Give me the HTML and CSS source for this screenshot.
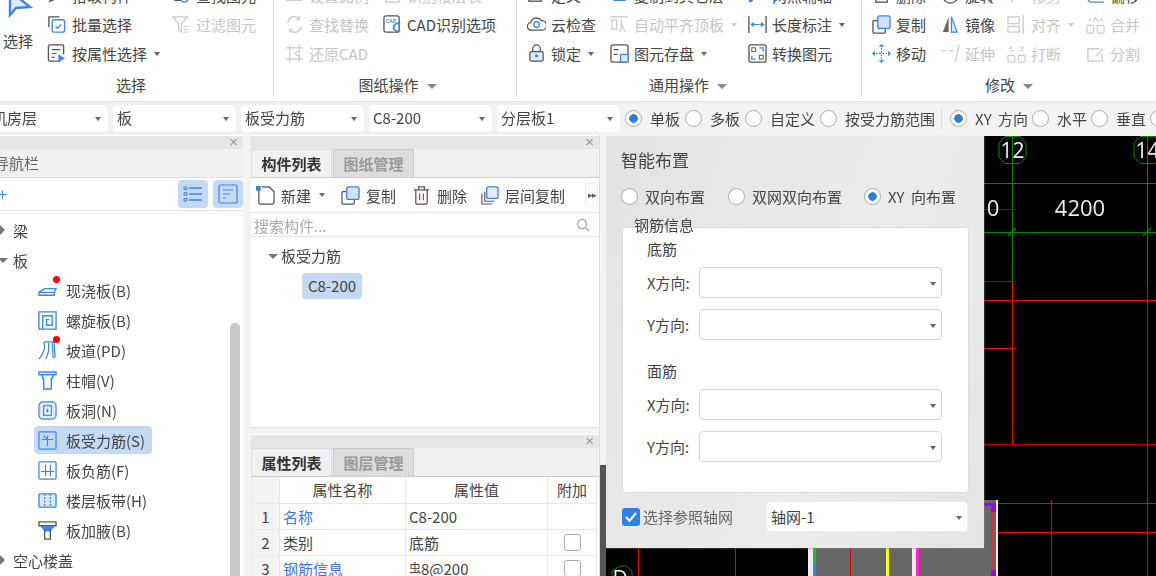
FILE: index.html
```html
<!DOCTYPE html>
<html lang="zh-CN">
<head>
  <meta charset="UTF-8">
  <title>智能布置</title>
  <link rel="stylesheet" href="styles.css">
</head>
<body>
<div class="app">
  <!-- 功能区 -->
  <div class="ribbon">
    <div class="group group-select">
      <div class="tools">
        <div class="big-tool">
          <svg class="big-icon" viewBox="0 0 30 30"><path d="M5 1v24l6-7 14-1z" fill="#dcebfb" stroke="#3a86e8" stroke-width="2.4"/></svg>
          <span>选择</span>
        </div>
        <div class="col col-a1">
          <div class="tool"><svg class="ic" viewBox="0 0 20 20"><path d="M3 16l2-5 8-8 3 3-8 8z" fill="none" stroke="#555" stroke-width="1.5"/></svg>拾取构件</div>
          <div class="tool"><svg class="ic" viewBox="0 0 20 20"><path d="M13 2H2v11" fill="none" stroke="#555" stroke-width="1.4"/><rect x="5.500" y="5" width="13" height="13" rx="2" fill="#fff" stroke="#3a86e8" stroke-width="1.4"/><path d="M9 12l2 2 4-4" fill="none" stroke="#3a86e8" stroke-width="1.400"/></svg>批量选择</div>
          <div class="tool"><svg class="ic" viewBox="0 0 20 20"><path d="M14 18H3a1.500 1.500 0 0 1-1.500-1.500v-14A1.500 1.500 0 0 1 3 1h13a1.500 1.500 0 0 1 1.500 1.500V11" fill="none" stroke="#555" stroke-width="1.400"/><path d="M5 6h9M5 10h5M5 14h3" stroke="#555" stroke-width="1.300"/><path d="M12 11l7 4-7 4z" fill="#3a86e8"/></svg>按属性选择<i class="caret"></i></div>
        </div>
        <div class="col">
          <div class="tool"><svg class="ic" viewBox="0 0 20 20"><rect x="2" y="2" width="13" height="13" rx="2" fill="none" stroke="#555" stroke-width="1.400"/><circle cx="13" cy="13" r="4" fill="#fff" stroke="#3a86e8" stroke-width="1.500"/></svg>查找图元</div>
          <div class="tool off"><svg class="ic" viewBox="0 0 20 20"><path d="M1 2h15l-6 7v9l-3-3V9z" fill="none" stroke="#ccc" stroke-width="1.400"/><path d="M12 12h6M12 15h6M12 18h6" stroke="#ccc"/></svg>过滤图元</div>
        </div>
      </div>
      <div class="group-name">选择</div>
    </div>

    <div class="group group-drawing">
      <div class="tools">
        <div class="col col-b1">
          <div class="tool off"><svg class="ic" viewBox="0 0 20 20"><rect x="2" y="6" width="16" height="9" fill="none" stroke="#ccc" stroke-width="1.400"/></svg>设置比例</div>
          <div class="tool off"><svg class="ic" viewBox="0 0 20 20"><path d="M3 8a7 7 0 0 1 12-4M17 12a7 7 0 0 1-12 4" fill="none" stroke="#ccc" stroke-width="1.600"/><path d="M15 1v4h-4M5 19v-4h4" fill="none" stroke="#ccc" stroke-width="1.200"/></svg>查找替换</div>
          <div class="tool off"><svg class="ic" viewBox="0 0 20 20"><path d="M1 4h18M1 16h18M5 1v18M15 1v18" stroke="#ccc" stroke-width="1.300"/><path d="M15 7l-5 3 5 3" fill="none" stroke="#ccc" stroke-width="1.300"/></svg>还原CAD</div>
        </div>
        <div class="col">
          <div class="tool off"><svg class="ic" viewBox="0 0 20 20"><rect x="3" y="3" width="14" height="14" fill="none" stroke="#ccc" stroke-width="1.400"/></svg>识别楼层表</div>
          <div class="tool"><svg class="ic" viewBox="0 0 20 20"><rect x="1" y="1" width="16" height="17" rx="2" fill="#fff" stroke="#555" stroke-width="1.400"/><text class="ic-cad" x="3" y="8">CAD</text><path d="M18 10a4 4 0 1 0 0 6" fill="none" stroke="#3a86e8" stroke-width="1.800"/></svg>CAD识别选项</div>
        </div>
      </div>
      <div class="group-name">图纸操作<i class="caret caret-name"></i></div>
    </div>

    <div class="group group-common">
      <div class="tools">
        <div class="col col-c1">
          <div class="tool"><svg class="ic" viewBox="0 0 20 20"><rect x="2" y="3" width="13" height="13" fill="none" stroke="#555" stroke-width="1.400"/><path d="M10 13l7-7" stroke="#3a86e8" stroke-width="1.600"/></svg>定义</div>
          <div class="tool"><svg class="ic" viewBox="0 0 20 20"><path d="M5 16a4 4 0 0 1-1-8 6 6 0 0 1 11-2 5 5 0 0 1 1 10z" fill="none" stroke="#555" stroke-width="1.400"/><circle cx="10" cy="10" r="3" fill="#dcebfb" stroke="#3a86e8" stroke-width="1.300"/></svg>云检查</div>
          <div class="tool"><svg class="ic" viewBox="0 0 20 20"><rect x="3" y="8" width="14" height="10" rx="1.500" fill="#dcebfb" stroke="#555" stroke-width="1.300"/><path d="M6 8V5a4 4 0 0 1 8 0v3" fill="none" stroke="#555" stroke-width="1.300"/><circle cx="10" cy="12.500" r="1.500" fill="#2f6fc6"/></svg>锁定<i class="caret"></i></div>
        </div>
        <div class="col col-c2">
          <div class="tool"><svg class="ic" viewBox="0 0 20 20"><rect x="3" y="1" width="14" height="14" rx="2" fill="#cfe2f9" stroke="#3a86e8" stroke-width="1.400"/></svg>复制到其它层</div>
          <div class="tool off"><svg class="ic" viewBox="0 0 20 20"><path d="M0 2h19" stroke="#ccc" stroke-width="1.500"/><rect x="2" y="5" width="5" height="10" fill="none" stroke="#ccc" stroke-width="1.300"/><path d="M12 5v7M10 18l3-7 3 7" fill="none" stroke="#ccc" stroke-width="1.300"/></svg>自动平齐顶板<i class="caret caret-off"></i></div>
          <div class="tool"><svg class="ic" viewBox="0 0 20 20"><rect x="1" y="1" width="18" height="18" rx="2" fill="none" stroke="#555" stroke-width="1.400"/><path d="M4 6h5M4 11h4" stroke="#555" stroke-width="1.300"/><rect x="11" y="11" width="8" height="8" fill="#dcebfb" stroke="#3a86e8" stroke-width="1.300"/></svg>图元存盘<i class="caret"></i></div>
        </div>
        <div class="col">
          <div class="tool"><svg class="ic" viewBox="0 0 20 20"><path d="M1 16L17 4" stroke="#555" stroke-width="1.400"/><circle cx="3" cy="15" r="2" fill="#3a86e8"/></svg>两点辅轴</div>
          <div class="tool"><svg class="ic" viewBox="0 0 20 20"><path d="M1 1v18M19 1v18" stroke="#555" stroke-width="1.400"/><path d="M3 10h14M3 10l3-2v4zM17 10l-3-2v4z" fill="#3a86e8" stroke="#3a86e8"/></svg>长度标注<i class="caret"></i></div>
          <div class="tool"><svg class="ic" viewBox="0 0 20 20"><rect x="1" y="1" width="18" height="18" rx="2" fill="none" stroke="#555" stroke-width="1.400"/><rect x="4" y="4" width="4" height="4" fill="none" stroke="#555"/><rect x="12" y="12" width="4" height="4" fill="none" stroke="#555"/><path d="M12 4h4v4M8 16H4v-4" fill="none" stroke="#3a86e8" stroke-width="1.300"/></svg>转换图元</div>
        </div>
      </div>
      <div class="group-name">通用操作<i class="caret caret-name"></i></div>
    </div>

    <div class="group group-edit">
      <div class="tools">
        <div class="col col-d1">
          <div class="tool"><svg class="ic" viewBox="0 0 20 20"><rect x="4" y="3" width="12" height="14" fill="none" stroke="#555" stroke-width="1.400"/><path d="M8 6v6M12 6v6" stroke="#d33" stroke-width="1.400"/></svg>删除</div>
          <div class="tool"><svg class="ic" viewBox="0 0 20 20"><path d="M6 6H2a1 1 0 0 0-1 1v11a1 1 0 0 0 1 1h11a1 1 0 0 0 1-1v-4" fill="none" stroke="#555" stroke-width="1.400"/><rect x="6" y="1" width="13" height="13" rx="2" fill="#cfe2f9" stroke="#3a86e8" stroke-width="1.400"/></svg>复制</div>
          <div class="tool"><svg class="ic" viewBox="0 0 20 20"><path d="M10 4v12M4 10h12" stroke="#3a86e8" stroke-width="1.300" stroke-dasharray="2 1.500"/><path d="M10 0l3 3H7zM10 20l3-3H7zM0 10l3-3v6zM20 10l-3-3v6z" fill="#3a86e8"/></svg>移动</div>
        </div>
        <div class="col col-d2">
          <div class="tool"><svg class="ic" viewBox="0 0 20 20"><circle cx="10" cy="10" r="8" fill="none" stroke="#555" stroke-width="1.400"/></svg>旋转</div>
          <div class="tool"><svg class="ic" viewBox="0 0 20 20"><path d="M8 2L2 18h6z" fill="#666"/><path d="M11 2l6 16h-6z" fill="#dcebfb" stroke="#3a86e8" stroke-width="1.300"/></svg>镜像</div>
          <div class="tool off"><svg class="ic" viewBox="0 0 20 20"><path d="M0 7h5M8 7h5" stroke="#ccc" stroke-width="1.400"/><path d="M19 1l-4 18" stroke="#ccc" stroke-width="1.400"/></svg>延伸</div>
        </div>
        <div class="col col-d3">
          <div class="tool off"><svg class="ic" viewBox="0 0 20 20"><path d="M8 2l-3 16" stroke="#ccc" stroke-width="1.400"/></svg>修剪</div>
          <div class="tool off"><svg class="ic" viewBox="0 0 20 20"><rect x="1" y="2" width="12" height="7" fill="none" stroke="#ccc" stroke-width="1.400"/><rect x="1" y="12" width="12" height="6" fill="none" stroke="#ccc" stroke-width="1.400"/><path d="M17 0v20" stroke="#ccc" stroke-width="1.400"/></svg>对齐<i class="caret caret-off"></i></div>
          <div class="tool off"><svg class="ic" viewBox="0 0 20 20"><rect x="1" y="12" width="7" height="7" rx="1" fill="none" stroke="#ccc" stroke-width="1.300"/><rect x="12" y="12" width="7" height="7" rx="1" fill="none" stroke="#ccc" stroke-width="1.300"/><path d="M3 3l2 2M5 3L3 5M15 3l2 2M17 3l-2 2" stroke="#ccc" stroke-width="1.300"/><path d="M7 7H3M13 7h4" stroke="#ccc"/></svg>打断</div>
        </div>
        <div class="col">
          <div class="tool"><svg class="ic" viewBox="0 0 20 20"><path d="M19 17H6a4 4 0 0 1-4-4V5" fill="none" stroke="#3a86e8" stroke-width="1.500"/><path d="M19 13H8a2 2 0 0 1-2-2V5" fill="none" stroke="#555" stroke-width="1.300"/></svg>偏移</div>
          <div class="tool off"><svg class="ic" viewBox="0 0 20 20"><rect x="1" y="11" width="7" height="8" rx="1" fill="none" stroke="#ccc" stroke-width="1.300"/><rect x="12" y="11" width="7" height="8" rx="1" fill="none" stroke="#ccc" stroke-width="1.300"/><path d="M4 3v4M16 3v4M7 7l3-4 3 4" fill="none" stroke="#ccc" stroke-width="1.300"/></svg>合并</div>
          <div class="tool off"><svg class="ic" viewBox="0 0 20 20"><path d="M14 5H2v13h15v-8" fill="none" stroke="#ccc" stroke-width="1.400"/><path d="M10 13l8-8" stroke="#ccc" stroke-width="1.400"/></svg>分割</div>
        </div>
      </div>
      <div class="group-name">修改<i class="caret caret-name"></i></div>
    </div>
  </div>

  <!-- 属性工具条 -->
  <div class="optbar">
    <div class="combo combo-floor">机房层<i class="caret"></i></div>
    <div class="combo">板<i class="caret"></i></div>
    <div class="combo">板受力筋<i class="caret"></i></div>
    <div class="combo">C8-200<i class="caret"></i></div>
    <div class="combo">分层板1<i class="caret"></i></div>
    <div class="radios">
      <label class="radio-item"><span class="radio checked"></span>单板</label>
      <label class="radio-item"><span class="radio"></span>多板</label>
      <label class="radio-item"><span class="radio"></span>自定义</label>
      <label class="radio-item"><span class="radio"></span>按受力筋范围</label>
    </div>
    <div class="radios radios-dir">
      <label class="radio-item"><span class="radio checked"></span>XY 方向</label>
      <label class="radio-item"><span class="radio"></span>水平</label>
      <label class="radio-item"><span class="radio"></span>垂直</label>
      <label class="radio-item"><span class="radio"></span></label>
    </div>
  </div>

  <div class="work">
    <!-- 导航栏 -->
    <div class="panel nav">
      <div class="dockbar">×</div>
      <div class="nav-title">导航栏</div>
      <div class="nav-tools">
        <span class="nav-plus">+</span>
        <span class="view-btn"><svg viewBox="0 0 20 16" width="20" height="16"><path d="M6 2h13M6 8h13M6 14h13" stroke="#3a86e8" stroke-width="1.300"/><path d="M1 1h3v2.500H1zM1 6.700h3v2.500H1zM1 12.500h3V15H1z" fill="none" stroke="#3a86e8"/></svg></span>
        <span class="view-btn"><svg viewBox="0 0 20 20" width="20" height="20"><rect x="1" y="1" width="18" height="18" rx="2" fill="none" stroke="#3a86e8" stroke-width="1.200"/><path d="M5 6h10M5 10h7M5 14h3" stroke="#3a86e8" stroke-width="1.200"/></svg></span>
      </div>
      <div class="nav-tree">
        <div class="scrollbar"></div>
        <div class="node"><i class="arrow-r"></i>梁</div>
        <div class="node"><i class="arrow-d"></i>板</div>
        <div class="leaf"><span class="leaf-icon dotted"><svg class="ic" viewBox="0 0 20 20"><path d="M1 12l6-4h12l-2 4v3H1z" fill="#fff" stroke="#3a86e8" stroke-width="1.400"/><path d="M1 12h16" stroke="#3a86e8" stroke-width="1.200"/></svg></span>现浇板(B)</div>
        <div class="leaf"><span class="leaf-icon"><svg class="ic" viewBox="0 0 20 20"><path d="M1 1h18v18H1zM5 19V5h10v10h-6V9h3" fill="none" stroke="#3a86e8" stroke-width="1.400"/></svg></span>螺旋板(B)</div>
        <div class="leaf"><span class="leaf-icon dotted"><svg class="ic" viewBox="0 0 20 20"><path d="M6 1h11l1 17M6 1c2 5 0 12-5 18M11 2c1 6 0 12-3 17M15 2l1 16" fill="none" stroke="#3a86e8" stroke-width="1.300"/></svg></span>坡道(PD)</div>
        <div class="leaf"><span class="leaf-icon"><svg class="ic" viewBox="0 0 20 20"><path d="M1 1h18v3H1zM4 4l1 4h1v11h8V8h1l1-4" fill="none" stroke="#3a86e8" stroke-width="1.500"/></svg></span>柱帽(V)</div>
        <div class="leaf"><span class="leaf-icon"><svg class="ic" viewBox="0 0 20 20"><rect x="1" y="1" width="18" height="18" rx="4" fill="#dcebfb" stroke="#3a86e8" stroke-width="1.300"/><rect x="6" y="5" width="8" height="10" fill="#fff" stroke="#3a86e8" stroke-width="1.300"/><rect x="9" y="8" width="2" height="4" fill="#3a86e8"/></svg></span>板洞(N)</div>
        <div class="leaf selected"><span class="leaf-icon"><svg class="ic" viewBox="0 0 20 20"><rect x="1" y="1" width="18" height="18" rx="1" fill="none" stroke="#3a86e8" stroke-width="1.300"/><path d="M4 9h12M10 5v11M6 5l4 4" stroke="#3a86e8" stroke-width="1.200" fill="none"/></svg></span>板受力筋(S)</div>
        <div class="leaf"><span class="leaf-icon"><svg class="ic" viewBox="0 0 20 20"><rect x="1" y="1" width="18" height="18" rx="1" fill="none" stroke="#3a86e8" stroke-width="1.300"/><path d="M3 11h14M8 4v12M13 4v12" stroke="#3a86e8" stroke-width="1.200"/></svg></span>板负筋(F)</div>
        <div class="leaf"><span class="leaf-icon"><svg class="ic" viewBox="0 0 20 20"><rect x="1" y="3" width="18" height="14" rx="1" fill="#dcebfb" stroke="#3a86e8" stroke-width="1.400"/><path d="M7 3v14M13 3v14" stroke="#3a86e8" stroke-width="1.400" stroke-dasharray="2 1.500"/></svg></span>楼层板带(H)</div>
        <div class="leaf"><span class="leaf-icon"><svg class="ic" viewBox="0 0 20 20"><path d="M1 1h18v4H1z" fill="none" stroke="#555" stroke-width="1.400"/><path d="M2 5h16l-5 6H7z" fill="#3a86e8"/><path d="M7 9v10h6V9" fill="none" stroke="#555" stroke-width="1.400"/></svg></span>板加腋(B)</div>
        <div class="node"><i class="arrow-r"></i>空心楼盖</div>
      </div>
    </div>

    <div class="middle">
      <!-- 构件列表 -->
      <div class="panel parts">
        <div class="dockbar">×</div>
        <div class="tabs">
          <span class="tab active">构件列表</span>
          <span class="tab">图纸管理</span>
        </div>
        <div class="parts-tools">
          <span class="ptool ptool-new"><svg class="ic" viewBox="0 0 20 20"><path d="M3 4v13a2 2 0 0 0 2 2h12a2 2 0 0 0 2-2V6l-5-5H6" fill="none" stroke="#555" stroke-width="1.300"/><rect x="0" y="0" width="5" height="5" fill="#3a86e8"/></svg>新建<i class="caret"></i></span>
          <span class="ptool ptool-copy"><svg class="ic" viewBox="0 0 20 20"><path d="M6 6H2a1 1 0 0 0-1 1v11a1 1 0 0 0 1 1h11a1 1 0 0 0 1-1v-4" fill="none" stroke="#555" stroke-width="1.300"/><rect x="6" y="1" width="13" height="13" rx="2" fill="#cfe2f9" stroke="#3a86e8" stroke-width="1.400"/></svg>复制</span>
          <span class="ptool ptool-del"><svg class="ic" viewBox="0 0 20 20"><path d="M2 4h16M7 4V1h6v3M4 4v14a1 1 0 0 0 1 1h10a1 1 0 0 0 1-1V4" fill="none" stroke="#555" stroke-width="1.300"/><path d="M8 8v7M12 8v7" stroke="#d33" stroke-width="1.300"/></svg>删除</span>
          <span class="ptool"><svg class="ic" viewBox="0 0 20 20"><path d="M2 8v11h11M5 6v10h10" fill="none" stroke="#555" stroke-width="1.200"/><rect x="7" y="1" width="12" height="12" rx="2" fill="#e3eefc" stroke="#3a86e8" stroke-width="1.400"/></svg>层间复制</span>
          <span class="more-btn">▸▸</span>
        </div>
        <div class="search">
          <span>搜索构件...</span>
          <svg viewBox="0 0 14 14" width="14" height="14"><circle cx="6" cy="6" r="4.500" fill="none" stroke="#aaa" stroke-width="1.300"/><path d="M9.500 9.500l3.500 3.500" stroke="#aaa" stroke-width="1.300"/></svg>
        </div>
        <div class="parts-tree">
          <div class="parts-root"><i class="arrow-d"></i>板受力筋</div>
          <div class="chip">C8-200</div>
        </div>
      </div>

      <!-- 属性列表 -->
      <div class="panel props">
        <div class="dockbar">×</div>
        <div class="tabs">
          <span class="tab active">属性列表</span>
          <span class="tab">图层管理</span>
        </div>
        <table class="prop-table">
          <thead>
            <tr><th class="num"></th><th class="c-name">属性名称</th><th class="c-val">属性值</th><th class="c-add">附加</th></tr>
          </thead>
          <tbody>
            <tr><td class="num">1</td><td class="link">名称</td><td>C8-200</td><td></td></tr>
            <tr><td class="num">2</td><td>类别</td><td>底筋</td><td class="mid"><span class="check"></span></td></tr>
            <tr><td class="num">3</td><td class="link">钢筋信息</td><td><span class="rebar">虫</span>8@200</td><td class="mid"><span class="check"></span></td></tr>
          </tbody>
        </table>
      </div>
    </div>

    <div class="splitter"></div>

    <!-- 绘图区 -->
    <div class="canvas">
      <svg class="cad" viewBox="606 136 550 440" width="550" height="440">
        <g stroke="#080" fill="none">
          <path d="M984 183.500H1156M984 232.500H1156M1012.500 136V281M1147.500 136V281"/>
          <path d="M1008 236l8-8M1143 236l8-8" stroke-width="1.200"/>
          <path d="M1005 136.500h15l6 6.500v14l-6 6.500h-15l-6-6.500v-14z"/>
          <path d="M1140 136.500h15l6 6.500v14l-6 6.500h-15l-6-6.500v-14z"/>
          <path d="M612 576v-5l8-5h6l6 5v5"/>
        </g>
        <g stroke="#e00" fill="none">
          <path d="M984 209.500h31M984 281.500h31" stroke="#900"/>
          <path d="M984 300.500H1156M984 348.500h31M1012.500 281V444M1147.500 281V576M1051.500 500V576M997 503.500H1156M984 532.500H1156M638.500 548V576M735.500 548V576"/>
          <path d="M984 444.500H1156" stroke="#b00"/>
        </g>
        <rect x="808" y="500" width="190" height="76" fill="#eee"/>
        <rect x="813" y="500" width="99" height="76" fill="#666"/>
        <rect x="916" y="500" width="80" height="76" fill="#666"/>
        <path d="M850.500 548V576" stroke="#c00"/>
        <path d="M814.500 548V564" stroke="#0c3" stroke-width="3"/>
        <path d="M814.500 564V576" stroke="#38f" stroke-width="3"/>
        <path d="M887.500 548V576" stroke="#ff0" stroke-width="3"/>
        <path d="M917.500 548V576" stroke="#f2c" stroke-width="3"/>
        <path d="M992.500 503V576" stroke="#d33" stroke-width="2"/>
        <rect x="984" y="503" width="12" height="3" fill="#90f"/>
        <rect x="991" y="503" width="5" height="9" fill="#90f"/>
        <rect x="991" y="570" width="5" height="6" fill="#90f"/>
        <text class="cad-no" x="1012.500" y="158">12</text>
        <text class="cad-no" x="1147.500" y="158">14</text>
        <text class="cad-dim" x="993" y="216">0</text>
        <text class="cad-dim" x="1080" y="216">4200</text>
        <text class="cad-no" x="620" y="586">D</text>
      </svg>

      <div class="dialog">
        <div class="dlg-title">智能布置</div>
        <div class="dlg-modes">
          <label class="radio-item mode-a"><span class="radio"></span>双向布置</label>
          <label class="radio-item mode-b"><span class="radio"></span>双网双向布置</label>
          <label class="radio-item"><span class="radio checked"></span>XY 向布置</label>
        </div>
        <div class="rebar-box">
          <span class="legend">钢筋信息</span>
          <div class="sub">底筋</div>
          <div class="field"><label>X方向:</label><div class="dlg-combo"><i class="caret"></i></div></div>
          <div class="field"><label>Y方向:</label><div class="dlg-combo"><i class="caret"></i></div></div>
          <div class="sub sub-top">面筋</div>
          <div class="field"><label>X方向:</label><div class="dlg-combo"><i class="caret"></i></div></div>
          <div class="field"><label>Y方向:</label><div class="dlg-combo"><i class="caret"></i></div></div>
        </div>
        <div class="dlg-foot">
          <span class="blue-check"><svg viewBox="0 0 18 18" width="18" height="18"><path d="M4 9l3.500 4L14 5" fill="none" stroke="#fff" stroke-width="2"/></svg></span>
          <span class="foot-label">选择参照轴网</span>
          <div class="dlg-combo foot-combo">轴网-1<i class="caret"></i></div>
        </div>
      </div>
    </div>
  </div>
</div>
</body>
</html>
```

FILE: styles.css
```css
/* 页面 */
* {
  box-sizing: border-box;
}
html, body {
  margin: 0;
  height: 100%;
  overflow: hidden;
  background: #f3f3f3;
}
body {
  font-family: "Noto Sans CJK SC", "Liberation Sans", sans-serif;
  font-size: 15px;
  color: #444;
}
.app {
  width: 1156px;
  height: 576px;
  overflow: hidden;
  filter: blur(0.45px);
}
.caret {
  display: inline-block;
  width: 0;
  height: 0;
  margin-left: 8px;
  border-left: 3.500px solid transparent;
  border-right: 3.500px solid transparent;
  border-top: 4px solid #666;
}
.caret-off {
  border-top-color: #ccc;
}
.caret-name {
  margin-left: 8px;
  vertical-align: 2px;
  border-left-width: 5px;
  border-right-width: 5px;
  border-top-width: 5px;
  border-top-color: #888;
}

/* 功能区 */
.ribbon {
  display: flex;
  height: 102px;
  background: #fff;
  overflow: hidden;
  border-bottom: 1px solid #e2e2e2;
}
.group {
  height: 97px;
  display: flex;
  flex-direction: column;
  border-right: 1px solid #ddd;
}
.group-select { width: 274px; }
.group-drawing { width: 243px; padding-left: 11px; }
.group-common { width: 345px; padding-left: 10px; }
.group-edit { flex: 1; padding-left: 10px; border-right: 0; }
.tools {
  display: flex;
  height: 92px;
  flex: none;
  margin-top: -19px;
}
.group-name {
  height: 24px;
  line-height: 24px;
  text-align: center;
  white-space: nowrap;
}
.group-select .group-name { padding-right: 11px; }
.group-drawing .group-name { padding-right: 6px; }
.group-common .group-name { padding-right: 12px; }
.group-edit .group-name { padding-right: 10px; }
.big-tool {
  width: 47px;
  padding: 0 0 0 3px;
  display: flex;
  flex-direction: column;
  line-height: 22px;
}
.big-icon {
  display: block;
  width: 30px;
  height: 30px;
  margin: 9px 0 0 2px;
  flex: none;
}
.big-tool span {
  margin-top: 10px;
}
.col-a1 { width: 125px; }
.col-a1 .ic { margin-right: 6px; }
.col-b1 { width: 98px; }
.col-c1 { width: 83px; }
.col-c2 { width: 138px; }
.col-d1 { width: 69px; }
.col-d2 { width: 66px; }
.col-d3 { width: 79px; }
.tool {
  display: flex;
  align-items: center;
  height: 29px;
  white-space: nowrap;
}
.tool .caret {
  margin-left: 7px;
}
.off {
  color: #c6c6c6;
}
.ic {
  width: 19px;
  height: 19px;
  flex: none;
  margin-right: 5px;
}
.ic-cad {
  font: bold 5px "Liberation Sans", sans-serif;
  fill: #3a86e8;
}

/* 属性工具条 */
.optbar {
  display: flex;
  align-items: center;
  height: 33px;
  padding-bottom: 1px;
  gap: 5px;
  background: #f3f3f3;
  white-space: nowrap;
}
.combo {
  position: relative;
  flex: none;
  width: 123px;
  height: 27px;
  line-height: 26px;
  padding-left: 4px;
  background: #fff;
  border-radius: 3px;
  box-shadow: 0 0 1px #ccc;
}
.combo .caret {
  position: absolute;
  right: 7px;
  top: 12px;
}
.combo-floor {
  width: 122px;
  margin-left: -14px;
  padding-left: 6px;
}
.radios {
  display: flex;
  flex: none;
  gap: 5px;
}
.radio-item {
  display: flex;
  align-items: center;
  word-spacing: 3px;
}
.radio {
  display: inline-block;
  flex: none;
  width: 17px;
  height: 17px;
  margin-right: 8px;
  border: 1px solid #aaa;
  border-radius: 50%;
  background: #fff;
}
.radio.checked {
  background: radial-gradient(circle, #2b7de0 0 4px, #fff 4.500px);
}
.radios-dir {
  margin-left: 1px;
  padding-left: 8px;
  gap: 4px;
  border-left: 1px solid #ddd;
}

/* 下方工作区 */
.work {
  display: flex;
  height: 441px;
}
.panel {
  background: #fff;
}
.dockbar {
  height: 13px;
  margin-top: 1px;
  padding-right: 5px;
  background: #e6e6e6;
  color: #999;
  font-size: 15px;
  line-height: 12px;
  text-align: right;
  font-family: "Liberation Sans", sans-serif;
}
.nav {
  display: flex;
  flex-direction: column;
  width: 243px;
  flex: none;
}
.nav-title {
  height: 29px;
  line-height: 28px;
  margin-left: -6px;
  background: #f0f0f0;
  color: #666;
  border-bottom: 1px solid #ddd;
}
.nav-tools {
  display: flex;
  align-items: center;
  height: 33px;
  gap: 5px;
  padding-bottom: 3px;
  border-bottom: 1px solid #e2e2e2;
}
.nav-plus {
  margin-right: auto;
  margin-left: -2px;
  color: #3a86e8;
  font-size: 16px;
}
.view-btn {
  display: flex;
  align-items: center;
  justify-content: center;
  width: 30px;
  height: 28px;
  margin-top: 3px;
  background: #c3daf2;
  border-radius: 4px;
}
.nav-tree {
  position: relative;
  flex: 1;
  padding-top: 4px;
  overflow: hidden;
}
.scrollbar {
  position: absolute;
  right: 3px;
  top: 112px;
  bottom: 0;
  width: 10px;
  background: #c8c8c8;
  border-radius: 5px 5px 0 0;
}
.node {
  display: flex;
  align-items: center;
  height: 30px;
  padding-left: 13px;
  position: relative;
}
.arrow-r, .arrow-d {
  position: absolute;
  left: 0;
  width: 0;
  height: 0;
}
.arrow-r {
  border-top: 5px solid transparent;
  border-bottom: 5px solid transparent;
  border-left: 5px solid #777;
}
.arrow-d {
  left: -2px;
  border-left: 5px solid transparent;
  border-right: 5px solid transparent;
  border-top: 5px solid #777;
}
.leaf {
  display: flex;
  align-items: center;
  height: 30px;
  padding-left: 4px;
  margin-left: 34px;
  width: 118px;
  white-space: nowrap;
  border-radius: 4px;
}
.leaf.selected {
  height: 28px;
  margin: 1px 0 1px 34px;
  background: #c3daf2;
}
.leaf-icon {
  position: relative;
  display: flex;
  flex: none;
  width: 28px;
}
.leaf-icon .ic {
  margin: 0;
}
.dotted::after {
  content: "";
  position: absolute;
  left: 15px;
  top: -5px;
  width: 7px;
  height: 7px;
  border-radius: 50%;
  background: #f00;
}

/* 中间面板 */
.middle {
  display: flex;
  flex-direction: column;
  width: 349px;
  margin-left: 8px;
  flex: none;
  border-right: 1px solid #ddd;
}
.parts {
  height: 293px;
  flex: none;
  border-bottom: 1px solid #ddd;
  display: flex;
  flex-direction: column;
}
.tabs {
  display: flex;
  height: 29px;
  background: #f0f0f0;
  border-bottom: 1px solid #ccc;
}
.tab {
  width: 81px;
  line-height: 28px;
  margin-right: 1px;
  text-align: center;
  color: #999;
  font-weight: 700;
  background: #ddd;
  border: 1px solid #ccc;
  border-bottom: 0;
}
.tab.active {
  color: #333;
  background: #f0f0f0;
  border-color: #ddd;
}
.parts-tools {
  display: flex;
  align-items: center;
  height: 35px;
  padding-left: 5px;
  white-space: nowrap;
  border-bottom: 1px solid #e6e6e6;
}
.ptool {
  display: flex;
  align-items: center;
}
.ptool .ic {
  margin-right: 6px;
}
.ptool-new { width: 85px; }
.ptool-new .caret { margin-left: 8px; }
.ptool-copy { width: 71px; }
.ptool-del { width: 68px; }
.more-btn {
  width: 13px;
  height: 24px;
  margin-left: 20px;
  line-height: 22px;
  font-size: 9px;
  letter-spacing: -1px;
  text-align: center;
  color: #555;
  background: #fff;
  border: 1px solid #eee;
  border-radius: 3px;
}
.search {
  display: flex;
  align-items: center;
  justify-content: space-between;
  height: 24px;
  padding: 1px 9px 0 3px;
  color: #aaa;
  border-bottom: 1px solid #e6e6e6;
}
.parts-tree {
  flex: 1;
  padding: 6px 0 0 17px;
}
.parts-root {
  position: relative;
  height: 26px;
  line-height: 26px;
  padding-left: 13px;
}
.parts-root .arrow-d {
  top: 11px;
  left: 0;
}
.chip {
  width: 60px;
  height: 26px;
  line-height: 26px;
  margin: 4px 0 0 34px;
  text-align: center;
  background: #c3daf2;
  border-radius: 4px;
}
.props {
  flex: 1;
  min-height: 0;
  overflow: hidden;
  margin-top: 6px;
}
.prop-table {
  width: 346px;
  border-collapse: collapse;
  table-layout: fixed;
}
.prop-table th, .prop-table td {
  height: 26px;
  padding: 0 3px;
  font-weight: 400;
  border: 1px solid #e8e8e8;
  white-space: nowrap;
}
.prop-table th {
  text-align: center;
  border-top: 0;
}
.prop-table .num {
  width: 28px;
  padding: 0;
  text-align: center;
  background: #f3f3f3;
}
.c-name { width: 126px; }
.c-val { width: 142px; }
.link {
  color: #3f74e8;
}
.mid {
  text-align: center;
}
.check {
  display: block;
  width: 17px;
  height: 17px;
  margin: 0 auto;
  border: 1px solid #aaa;
  border-radius: 3px;
  background: #fff;
}
.rebar {
  position: relative;
  top: -2px;
  font-size: 12px;
}
.splitter {
  width: 6px;
  flex: none;
  background: linear-gradient(#f3f3f3 0 330px, #555 330px);
}

/* 绘图区 */
.canvas {
  position: relative;
  flex: 1;
  margin-top: 1px;
  background: #000;
  overflow: hidden;
}
.cad {
  display: block;
}
.cad-no {
  fill: #eee;
  font: 21px "Open Sans", sans-serif;
  text-anchor: middle;
}
.cad-dim {
  fill: #eee;
  font: 22px "Open Sans", sans-serif;
  text-anchor: middle;
}
.dialog {
  position: absolute;
  left: 0;
  top: 0;
  width: 378px;
  height: 412px;
  padding: 11px 16px 0 16px;
  background: linear-gradient(110deg, #e3e3e3, #ececec 60%, #e4e4e4);
  box-shadow: 0 0 2px #888;
}
.dlg-title {
  height: 26px;
  line-height: 26px;
  font-size: 17px;
  margin-left: -1px;
}
.dlg-modes {
  display: flex;
  margin: 10px 0 0 -1px;
  height: 26px;
}
.dlg-modes .radio {
  margin-right: 7px;
}
.mode-a { width: 107px; }
.mode-b { width: 136px; }
.rebar-box {
  position: relative;
  width: 347px;
  height: 266px;
  margin-top: 18px;
  padding: 10px 0 0 24px;
  background: #fff;
  border: 1px solid #ddd;
  border-radius: 4px;
}
.legend {
  position: absolute;
  left: 11px;
  top: -13px;
  line-height: 20px;
}
.sub {
  height: 22px;
  line-height: 22px;
  margin-bottom: 7px;
}
.sub-top {
  margin-top: 20px;
  margin-bottom: 7px;
}
.field {
  display: flex;
  align-items: center;
  margin-bottom: 11px;
}
.field label {
  width: 52px;
  flex: none;
}
.dlg-combo {
  position: relative;
  width: 243px;
  height: 31px;
  background: #fff;
  border: 1px solid #d6d6d6;
  border-radius: 4px;
}
.dlg-combo .caret {
  position: absolute;
  right: 5px;
  top: 14px;
}
.dlg-foot {
  display: flex;
  align-items: center;
  margin-top: 8px;
  height: 31px;
}
.blue-check {
  width: 18px;
  height: 18px;
  background: #2f80e8;
  border-radius: 3px;
}
.blue-check svg {
  display: block;
}
.foot-label {
  width: 123px;
  margin-left: 3px;
  flex: none;
  color: #666;
}
.foot-combo {
  width: 202px;
  padding-left: 4px;
  line-height: 30px;
  border-color: #eee;
}
```
